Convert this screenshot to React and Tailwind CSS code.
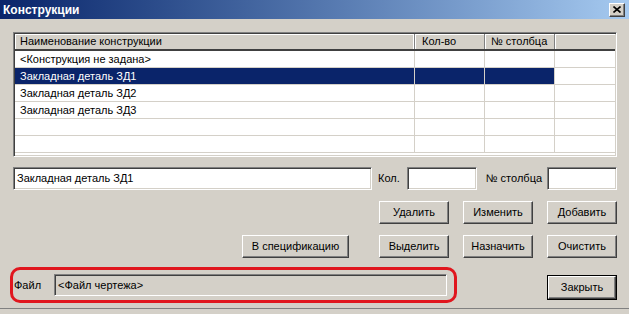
import React from 'react';

const sunken = "border border-t-[#808080] border-l-[#808080] border-b-white border-r-white shadow-[inset_1px_1px_0_#404040,inset_-1px_-1px_0_#d4d0c8]";
const raised = "border border-t-white border-l-white border-r-[#404040] border-b-[#404040] shadow-[inset_-1px_-1px_0_#808080]";

const Btn = ({ children, className = '' }) => (
    <button className={`h-[23px] bg-[#D4D0C8] ${raised} text-[11px] text-black flex items-center justify-center ${className}`}>{children}</button>
);

const rows = [
    { name: '<Конструкция не задана>' },
    { name: 'Закладная деталь ЗД1', selected: true },
    { name: 'Закладная деталь ЗД2' },
    { name: 'Закладная деталь ЗД3' },
    { name: '' },
    { name: '' },
];

const App = () => {
    return (
        <div className="w-[629px] h-[314px] bg-[#D4D0C8] flex flex-col overflow-hidden text-black" style={{ fontFamily: '"Liberation Sans", Arial, sans-serif' }}>
            {/* title bar */}
            <div className="h-[19px] flex items-center justify-between pl-[3px] pr-[4px] bg-gradient-to-r from-[#0A246A] to-[#A6CAF0]">
                <span className="text-white font-bold text-[12px] leading-none">Конструкции</span>
                <div className={`w-[16px] h-[14px] bg-[#D4D0C8] ${raised} flex items-center justify-center`}>
                    <svg width="8" height="7" viewBox="0 0 8 7"><path d="M0.5 0.5 L7.5 6.5 M7.5 0.5 L0.5 6.5" stroke="#000" strokeWidth="1.6" /></svg>
                </div>
            </div>

            <div className="pl-[13px] pr-[12px] flex flex-col">
                {/* list */}
                <div className={`mt-[13px] h-[125px] bg-white ${sunken} p-px overflow-hidden`}>
                    <div className="grid grid-cols-[400px_70px_70px_1fr] h-[17px] bg-[#D4D0C8] border-b-2 border-b-[#404040] text-[11px]">
                        <div className="pl-[5px] border-r border-r-[#808080] shadow-[inset_-1px_0_0_#fff,inset_1px_1px_0_#fff] leading-[15px]">Наименование конструкции</div>
                        <div className="pl-[7px] border-r border-r-[#808080] shadow-[inset_1px_1px_0_#fff] leading-[15px]">Кол-во</div>
                        <div className="pl-[6px] border-r border-r-[#808080] shadow-[inset_1px_1px_0_#fff] leading-[15px]">№ столбца</div>
                        <div className="shadow-[inset_1px_1px_0_#fff]"></div>
                    </div>
                    {rows.map((r, i) => (
                        <div key={i} className="grid grid-cols-[400px_70px_70px_1fr] h-[17px] border-b border-b-[#D4D0C8] text-[11px]">
                            <div className={`pl-[5px] border-r border-r-[#D4D0C8] leading-[16px] ${r.selected ? 'bg-[#0A246A] text-white' : ''}`}>{r.name}</div>
                            <div className={`border-r border-r-[#D4D0C8] ${r.selected ? 'bg-[#0A246A]' : ''}`}></div>
                            <div className={`border-r border-r-[#D4D0C8] ${r.selected ? 'bg-[#0A246A]' : ''}`}></div>
                            <div></div>
                        </div>
                    ))}
                </div>

                {/* edit row */}
                <div className="mt-[10px] h-[23px] flex items-center text-[11px]">
                    <div className={`w-[359px] h-[23px] bg-white ${sunken} pl-[3px] flex items-center`}>Закладная деталь ЗД1</div>
                    <span className="ml-[6px]">Кол.</span>
                    <div className={`ml-[7px] w-[70px] h-[23px] bg-white ${sunken}`}></div>
                    <span className="ml-[9px]">№ столбца</span>
                    <div className={`ml-auto w-[70px] h-[23px] bg-white ${sunken}`}></div>
                </div>

                {/* buttons */}
                <div className="mt-[11px] flex justify-end gap-[14px]">
                    <Btn className="w-[70px]">Удалить</Btn>
                    <Btn className="w-[70px]">Изменить</Btn>
                    <Btn className="w-[70px]">Добавить</Btn>
                </div>
                <div className="mt-[11px] flex justify-end">
                    <Btn className="w-[107px] mr-[30px]">В спецификацию</Btn>
                    <div className="flex gap-[14px]">
                        <Btn className="w-[70px]">Выделить</Btn>
                        <Btn className="w-[70px]">Назначить</Btn>
                        <Btn className="w-[70px]">Очистить</Btn>
                    </div>
                </div>

                {/* file row */}
                <div className="mt-[9px] flex items-start">
                    <div className="-ml-[3px] w-[447px] h-[36px] border-[3px] border-[#E0161E] rounded-[10px] flex items-center pl-px text-[11px]">
                        <span>Файл</span>
                        <div className={`ml-[13px] w-[393px] h-[22px] bg-[#D4D0C8] ${sunken} pl-[3px] flex items-center`}>&lt;Файл чертежа&gt;</div>
                    </div>
                    <div className="ml-auto mt-[8px] border border-black">
                        <Btn className="w-[68px] h-[21px]">Закрыть</Btn>
                    </div>
                </div>
            </div>
            <div className="mt-[5px] h-px bg-[#808080]"></div>
        </div>
    );
};

export default App;
